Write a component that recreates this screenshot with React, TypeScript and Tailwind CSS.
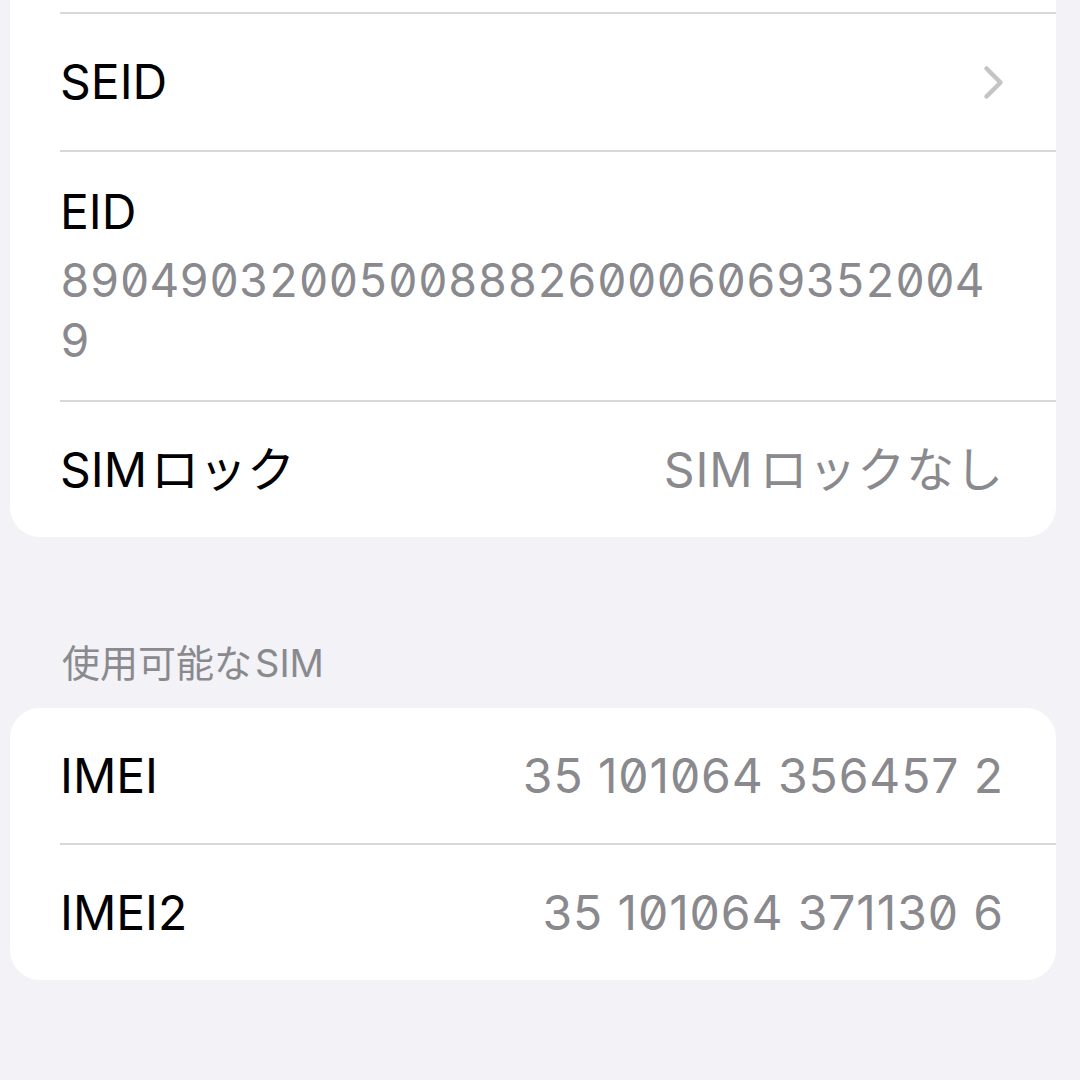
const font = "font-['Inter','Noto_Sans_CJK_JP',sans-serif]";

function Chevron() {
  return (
    <svg width="21" height="35" viewBox="0 0 21 35" fill="none" className="shrink-0">
      <path
        d="M3.5 3.5 L17.5 17.5 L3.5 31.5"
        stroke="#c4c4c7"
        strokeWidth={4.5}
        strokeLinecap="round"
        strokeLinejoin="round"
      />
    </svg>
  );
}

// latin + japanese gets a little air between, like iOS does
function Mixed({ latin, jp, jpFirst, gap = "ml-[6px]" }: { latin: string; jp: string; jpFirst?: boolean; gap?: string }) {
  return jpFirst ? (
    <>
      {jp}
      <span className={gap}>{latin}</span>
    </>
  ) : (
    <>
      {latin}
      <span className={gap}>{jp}</span>
    </>
  );
}

function Row({
  label,
  value,
  first,
  height = "h-[137px]",
}: {
  label: React.ReactNode;
  value?: React.ReactNode;
  first?: boolean;
  height?: string;
}) {
  return (
    <div className={`ml-[50px] ${first ? "" : "border-t-2 border-[#d8d8dc]"}`}>
      <div className={`flex ${height} items-center justify-between pr-[52px]`}>
        <span className="text-[48px] leading-[58px] text-black">{label}</span>
        {value && (
          <span className="text-[48px] leading-[58px] tracking-[0.9px] slashed-zero text-[#8a8a8e]">
            {value}
          </span>
        )}
      </div>
    </div>
  );
}

export default function App() {
  return (
    <div className={`min-h-screen w-full bg-[#f2f2f7] pl-[10px] pr-[24px] ${font}`}>
      {/* first card, its top is scrolled off screen */}
      <div className="overflow-hidden rounded-b-[30px] bg-white">
        <div className="h-[12px]" />
        <div className="ml-[50px] border-t-2 border-[#d8d8dc]">
          <div className="flex h-[136px] items-center justify-between pr-[52px]">
            <span className="text-[48px] leading-[58px] text-black">SEID</span>
            <Chevron />
          </div>
        </div>
        <div className="ml-[50px] border-t-2 border-[#d8d8dc]">
          <div className="h-[248px] pr-[52px] pt-[31px]">
            <div className="text-[48px] leading-[58px] text-black">EID</div>
            <div className="mt-[9px] w-[935px] break-all text-[46px] leading-[60px] tabular-nums slashed-zero text-[#8a8a8e]">
              89049032005008882600060693520049
            </div>
          </div>
        </div>
        <Row
          label={<Mixed latin="SIM" jp="ロック" gap="ml-[4px]" />}
          value={<Mixed latin="SIM" jp="ロックなし" gap="ml-[6px]" />}
          height="h-[135px]"
        />
      </div>

      <div className="mt-[103px] pl-[52px] text-[38px] leading-[46px] text-[#8a8a8e]">
        <Mixed latin="SIM" jp="使用可能な" jpFirst gap="ml-[3px]" />
      </div>

      <div className="mt-[22px] overflow-hidden rounded-[30px] bg-white">
        <Row label="IMEI" value="35 101064 356457 2" first height="h-[135px]" />
        <Row label="IMEI2" value="35 101064 371130 6" height="h-[135px]" />
      </div>
    </div>
  );
}
